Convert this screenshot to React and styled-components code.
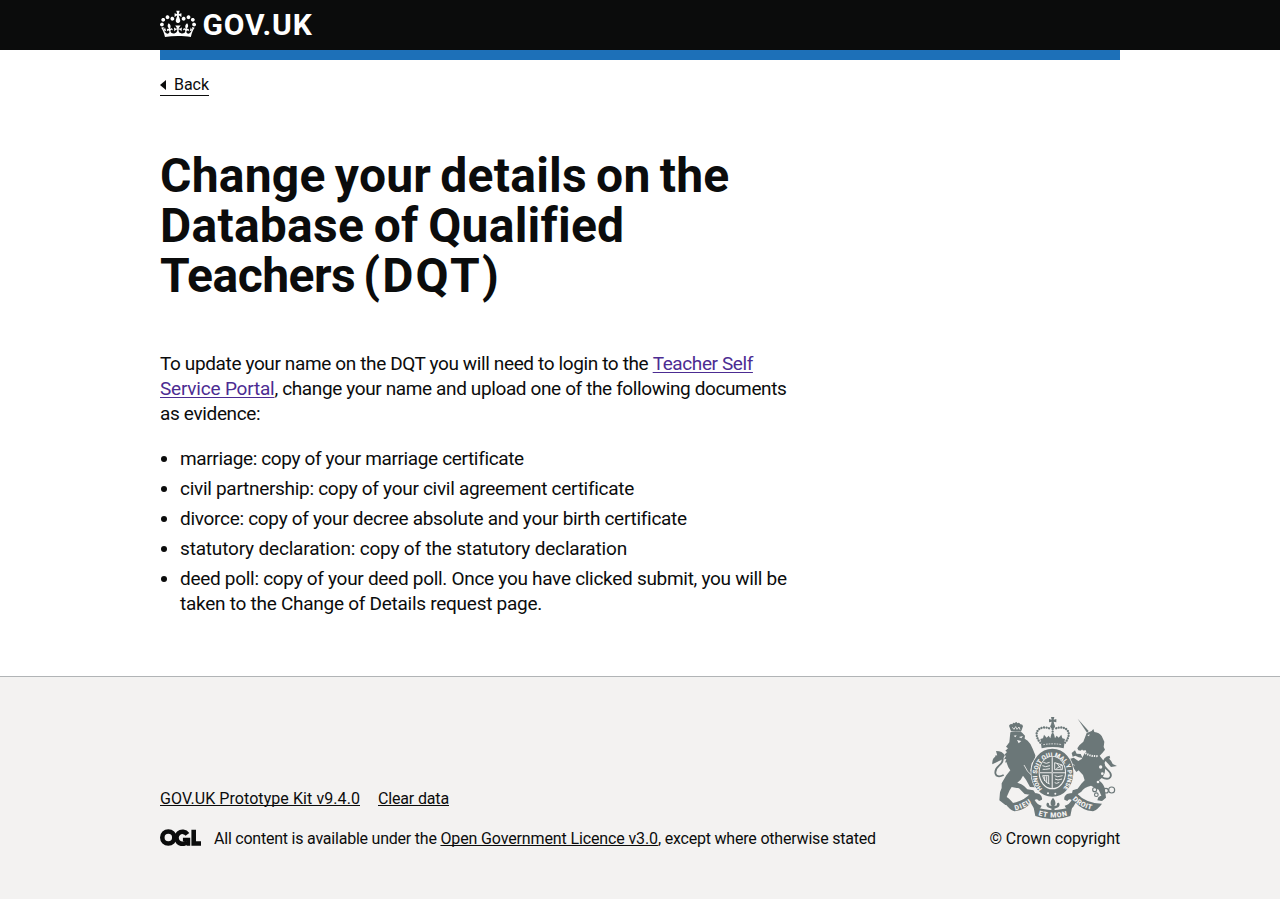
import React from "react";
import styled, { createGlobalStyle } from "styled-components";

const Global = createGlobalStyle`
  *, *::before, *::after { box-sizing: border-box; }
  body { margin: 0; background: #fff; color: #0b0c0c; font-family: Roboto, Arial, sans-serif; }
`;

const Page = styled.div`
  display: flex;
  flex-direction: column;
  min-height: 899px;
`;
const Container = styled.div`
  width: 960px;
  margin: 0 auto;
`;
const Header = styled.header`
  height: 50px;
  background: #0b0c0c;
  color: #fff;
`;
const Brand = styled.a`
  display: flex;
  height: 50px;
  padding-bottom: 3px;
  align-items: center;
  gap: 6.5px;
  color: #fff;
  text-decoration: none;
`;
const CrownIcon = styled.svg`
  width: 36px;
  height: 30px;
  padding: 1px 0;
  flex: none;
  fill: currentColor;
`;
const Wordmark = styled.span`
  font-size: 30px;
  line-height: 30px;
  font-weight: 700;
  letter-spacing: 0.9px;
  padding-top: 2px;
`;
const BlueBar = styled.div`
  height: 10px;
  background: #1d70b8;
`;
const BackLink = styled.a`
  display: flex;
  width: fit-content;
  align-items: center;
  gap: 8px;
  height: 21px;
  margin-top: 15px;
  border-bottom: 1px solid #0b0c0c;
  font-size: 16px;
  line-height: 20px;
  letter-spacing: -0.04px;
  color: #0b0c0c;
`;
const Arrow = styled.svg`
  width: 6px;
  height: 10px;
  fill: currentColor;
`;
const Main = styled.main`
  display: flex;
  flex-direction: column;
  width: 640px;
  padding: 55px 0 60px;
`;
const Line = styled.span`
  display: block;
  white-space: nowrap;
  letter-spacing: ${(p) => p.$track || 0}px;
  word-spacing: ${(p) => p.$gap || 0}px;
`;
const Run = styled.span`
  letter-spacing: ${(p) => p.$track || 0}px;
`;
const Title = styled.h1`
  margin: 0 0 50px;
  font-size: 48px;
  line-height: 50px;
  font-weight: 700;
`;
const Body = styled.p`
  margin: 0 0 20px;
  font-size: 19px;
  line-height: 25px;
`;
const TextLink = styled.a`
  color: ${(p) => (p.$visited ? "#4c2c92" : "#0b0c0c")};
  letter-spacing: ${(p) => p.$track || 0}px;
  text-decoration: underline;
  text-decoration-thickness: 1px;
  text-underline-offset: ${(p) => (p.$visited ? 2 : 1)}px;
  text-decoration-skip-ink: none;
`;
const List = styled.ul`
  display: flex;
  flex-direction: column;
  gap: 5px;
  margin: 0;
  padding: 0 0 0 20px;
  font-size: 19px;
  line-height: 25px;
`;
const Item = styled.li`
  list-style: disc;
`;
const Footer = styled.footer`
  flex: 1;
  padding-top: 40px;
  border-top: 1px solid #b1b4b6;
  background: #f3f2f1;
  font-size: 16px;
  line-height: 20px;
`;
const FooterRow = styled(Container)`
  display: flex;
  align-items: flex-end;
  justify-content: space-between;
`;
const Meta = styled.div`
  display: flex;
  flex-direction: column;
  gap: 20px;
`;
const MetaLinks = styled.div`
  display: flex;
  gap: 18px;
`;
const Licence = styled.div`
  display: flex;
  align-items: center;
  gap: 13px;
  white-space: nowrap;
`;
const OglLogo = styled.svg`
  width: 41px;
  height: 17px;
  margin-bottom: 3px;
  flex: none;
`;
const Copyright = styled.a`
  display: flex;
  flex-direction: column;
  align-items: flex-end;
  gap: 10px;
  color: #0b0c0c;
`;
const Arms = styled.svg`
  width: 130px;
  height: 102px;
  overflow: visible;
  fill: #6b7778;
`;

function Crown() {
  return (
    <CrownIcon viewBox="0 0 132 97" aria-hidden="true">
      <path
        fillRule="evenodd"
        d="M25 30.2c3.5 1.5 7.7-.2 9.1-3.7 1.5-3.6-.2-7.8-3.9-9.2-3.6-1.4-7.6.3-9.1 3.9-1.4 3.5.3 7.5 3.9 9zM9 39.5c3.6 1.5 7.8-.2 9.2-3.7 1.5-3.6-.2-7.8-3.9-9.1-3.6-1.5-7.6.2-9.1 3.8-1.4 3.5.3 7.5 3.8 9zM4.4 57.2c3.5 1.5 7.7-.2 9.1-3.8 1.5-3.6-.2-7.7-3.9-9.1-3.5-1.5-7.6.3-9.1 3.8-1.4 3.5.3 7.6 3.9 9.1zm38.3-21.4c3.5 1.5 7.7-.2 9.1-3.8 1.5-3.6-.2-7.7-3.9-9.1-3.6-1.5-7.6.3-9.1 3.8-1.3 3.6.4 7.7 3.9 9.1zm64.4-5.6c-3.6 1.5-7.8-.2-9.1-3.7-1.5-3.6.2-7.8 3.8-9.2 3.6-1.4 7.7.3 9.2 3.9 1.3 3.5-.4 7.5-3.9 9zm15.9 9.3c-3.6 1.5-7.7-.2-9.1-3.7-1.5-3.6.2-7.8 3.7-9.1 3.6-1.5 7.7.2 9.2 3.8 1.5 3.5-.3 7.5-3.8 9zm4.7 17.7c-3.6 1.5-7.8-.2-9.2-3.8-1.5-3.6.2-7.7 3.9-9.1 3.6-1.5 7.7.3 9.2 3.8 1.3 3.5-.4 7.6-3.9 9.1zM89.3 35.8c-3.6 1.5-7.8-.2-9.2-3.8-1.4-3.6.2-7.7 3.9-9.1 3.6-1.5 7.7.3 9.2 3.8 1.4 3.6-.3 7.7-3.9 9.1zM69.7 17.7l8.9 4.7V9.3l-8.9 2.8c-.2-.3-.5-.6-.9-.9L72.4 0H59.6l3.5 11.2c-.3.3-.6.5-.9.9l-8.8-2.8v13.1l8.8-4.7c.3.3.6.7.9.9l-5 15.4v.1c-.2.8-.4 1.6-.4 2.4 0 4.1 3.1 7.5 7 8.1h.2c.3 0 .7.1 1 .1.4 0 .7 0 1-.1h.2c4-.6 7.1-4.1 7.1-8.1 0-.8-.1-1.7-.4-2.4V34l-5.1-15.4c.4-.2.7-.6 1-.9zM66 92.8c16.9 0 32.8 1.1 47.1 3.2 4-16.9 8.9-26.7 14-33.5l-9.6-3.4c1 4.9 1.1 7.2 0 10.2-1.5-1.4-3-4.3-4.2-8.7L108.6 76c2.8-2 5-3.2 7.5-3.3-4.4 9.4-10 11.9-13.6 11.2-4.3-.8-6.3-4.6-5.6-7.9 1-4.7 5.7-5.9 8-.5 4.3-8.7-3-11.4-7.6-8.8 7.1-7.2 7.9-13.5 2.1-21.1-8 6.1-8.1 12.3-4.5 20.8-4.7-5.4-12.1-2.5-9.5 6.2 3.4-5.2 7.9-2 7.2 3.1-.6 4.3-6.4 7.8-13.5 7.2-10.3-.9-10.9-8-11.2-13.8 2.5-.5 7.1 1.8 11 7.3L80.2 60c-4.1 4.4-8 5.3-12.3 5.4 1.4-4.4 8-11.6 8-11.6H55.5s6.4 7.2 7.9 11.6c-4.2-.1-8-1-12.3-5.4l1.4 16.4c3.9-5.5 8.5-7.7 10.9-7.3-.3 5.8-.9 12.8-11.1 13.8-7.2.6-12.9-2.9-13.5-7.2-.7-5 3.8-8.3 7.1-3.1 2.7-8.7-4.6-11.6-9.4-6.2 3.7-8.5 3.6-14.7-4.6-20.8-5.8 7.6-5 13.9 2.2 21.1-4.7-2.6-11.9.1-7.7 8.8 2.3-5.5 7.1-4.2 8.1.5.7 3.3-1.3 7.1-5.7 7.9-3.5.7-9-1.8-13.5-11.2 2.5.1 4.7 1.3 7.5 3.3l-4.7-15.4c-1.2 4.4-2.7 7.2-4.3 8.7-1.1-3-.9-5.3 0-10.2l-9.5 3.4c5 6.9 9.9 16.7 14 33.5 14.8-2.1 30.8-3.2 47.7-3.2z"
      />
    </CrownIcon>
  );
}

/* Three interlocking strokes: ring, open ring with bar, and corner. */
function Ogl() {
  return (
    <OglLogo viewBox="0 0 483 196" fill="none" stroke="#0b0c0c" strokeWidth="54" aria-label="Open Government Licence">
      <circle cx="98" cy="98" r="71" />
      <path d="M323 61A71 71 0 1 0 321 146" />
      <path d="M270 122H335V196" strokeWidth="42" />
      <path d="M397 8V168H483" />
    </OglLogo>
  );
}

function CoatOfArms() {
  return (
    <Arms viewBox="30 36 390 306" aria-hidden="true">
      {/* central crown */}
      <path d="M213 36h10l-2 8 8-2v10l-8-2 2 9h-10l2-9-8 2V42l8 2z" />
      <circle cx="218" cy="64" r="7" />
      <g fill="none" stroke="#6b7778" strokeWidth="7" strokeLinecap="round" strokeDasharray="0.1 7.6">
        <path d="M181 113C156 84 176 58 211 71" />
        <path d="M255 113C280 84 260 58 225 71" />
        <path d="M218 72V92" />
      </g>
      <path d="M214 88h8l3 12 5-8 6 6 8-9 3 11 8 2-4 18q-33-7-66 0l-4-18 8-2 3-11 8 9 6-6 5 8z" />
      <path d="M183 117q35-8 70 0l-2 13q-33-8-66 0z" />
      <path d="M190 119q28-5 56 0" fill="none" stroke="#f3f2f1" strokeWidth="2.5" strokeDasharray="5 3" />

      {/* lion */}
      <path d="M93 79l-6-17q4-8 10-4 3-7 8-3 3-8 7 0 6-5 9 3 7-1 8 6l-6 16q-15-4-30-1z" />
      <path d="M97 67l5 6 5-8 4 8 6-7 3 8" fill="none" stroke="#f3f2f1" strokeWidth="2.5" />
      <path d="M91 82q16-6 34 0l10 10-1 9 9 6q11 10 15 24l8 20-1 12-10 12-4 22 10 14 5 16 2 20-18-1-12-22-9-12-7 12-10 9q14 4 20 10l10 10 18 3 6 9-12 5-20-3-17-17-22-4-6 10-9 20q6 3 14 12l7 8-5 5-20-1-18-14 2-24 5-13v-14l14-24 12-15-6-9-6-16-4 2 4-11-7 1 6-11-6-1 9-10-5-4 8-7-6-5 10-13z" />
      <path d="M71 210C42 224 40 197 57 182C73 168 74 150 46 154" fill="none" stroke="#6b7778" strokeWidth="5.5" />
      <path d="M37 178q-2-22 15-26l-4-14q20 0 26 13-2 12-17 17z" />
      <path d="M101 92l9-1-4 6zM117 96l12-3-5 7zM111 105l13 3-8 7z" fill="#f3f2f1" />
      <path d="M132 180q10 22 22 30" fill="none" stroke="#f3f2f1" strokeWidth="2.5" />

      {/* unicorn */}
      <path d="M293 41l33 37-5 5z" />
      <path d="M320 84l15-6 5-6 3 9q15 2 22 12l8 17-2 16 4 8-8 10-8 8 10 13q9 20 5 39l-6 13-11 9q18 15 18 30l3 22-12 10-14-2 3-9 9-5-8-18-23-12q-21 5-29 18l-14 9-14-4 2-9 15-5 11-15 10-10-5-16-19-20-7-11-11-2-7 8-6-11 10-12 12-4 14 10 10-6 8-16 6-7-2-3-14 1-8-1-3-6 6-9 12-11z" />
      <path d="M275 144l10-8 5 10 12 1 6 12-12-2-10-5-8 3zM268 177l19 5 10 13-8 6-9-13-16 2z" />
      <path d="M364 216C391 230 402 211 382 194C364 179 369 161 390 157" fill="none" stroke="#6b7778" strokeWidth="5.5" />
      <path d="M368 177q0-23 22-25l-4 8q9 8 12 17l13 6-18 3q-9-10-16-18z" />
      <path d="M304 136q22 20 52 17" fill="none" stroke="#f3f2f1" strokeWidth="6" strokeDasharray="4 3" />
      <path d="M322 91l7-3-2 6z" fill="#f3f2f1" />
      <g fill="none" stroke="#6b7778" strokeWidth="3.4">
        <circle cx="344" cy="254" r="6" />
        <circle cx="349" cy="269" r="5.5" />
        <circle cx="378" cy="257" r="7" />
        <circle cx="395" cy="255" r="9" />
        <circle cx="364" cy="280" r="5" />
      </g>
      <g fill="#f3f2f1">
        <circle cx="362" cy="186" r="5" />
        <circle cx="367" cy="206" r="4" />
        <circle cx="354" cy="231" r="4" />
      </g>

      {/* garter and shield */}
      <ellipse cx="217" cy="203" rx="65" ry="75" fill="#f3f2f1" />
      <ellipse cx="217" cy="203" rx="52" ry="61" fill="none" stroke="#6b7778" strokeWidth="22" />
      <path id="garter" d="M187 252A46 55 0 1 1 248 252" fill="none" />
      <text fontFamily="Roboto, sans-serif" fontWeight="900" fontSize="19" fill="#f3f2f1">
        <textPath href="#garter" textLength="246" lengthAdjust="spacingAndGlyphs">HONI SOIT QUI MAL Y PENSE</textPath>
      </text>
      <ellipse cx="217" cy="202" rx="38" ry="47" />
      <path d="M217 157v92M179 203h76" stroke="#f3f2f1" strokeWidth="4" />
      <path d="M217 157v92M179 203h76" stroke="#6b7778" strokeWidth="1" />
      <g fill="none" stroke="#f3f2f1" strokeWidth="2.8">
        <path d="M190 172l9 3 10-3M187 182l10 3 13-3M188 193h9l13-2" />
        <path d="M224 173v21h23v-14zM231 175l12 16M246 180l-17 11" />
        <path d="M188 212q5 20 21 25M188 212h18v25M194 214v14M200 214v20" />
        <path d="M224 212l9 3 15-3M225 222l9 3 12-3M224 233l6 2 8-3" />
      </g>
      <g fill="#f3f2f1">
        <circle cx="204" cy="265" r="3" />
        <circle cx="226" cy="266" r="3" />
      </g>

      {/* motto ribbon */}
      <path d="M76 296q48 0 76-31 14-3 26 2 10 7 8 17l-9 4q-5-8-13-3 8 15 21 17-6 14-18 11-9-7-15-20-16 22-49 26-15-6-27-23z" />
      <path d="M366 296q-48 0-76-31-14-3-29 2-10 7-8 17l9 4q5-8 13-3-8 15-21 17 6 14 18 11 9-7 15-20 19 22 52 26 15-6 27-23z" />
      <path d="M160 304q59 23 117 0l-6 29q-53 20-105 0z" />
      <path d="M219 278q13 15 4 25l8-2q-2-9 6-8 6 11-8 16l-6 2 2 6h-12l2-6-6-2q-14-5-8-16 8-1 6 8l8 2q-9-10 4-25z" />
      <path id="dieu" d="M106 316Q139 309 164 285" fill="none" />
      <path id="etmon" d="M175 331Q218 344 265 331" fill="none" />
      <path id="droit" d="M277 283Q302 309 340 315" fill="none" />
      <g fontFamily="Roboto, sans-serif" fontWeight="900" fontSize="21" fill="#f3f2f1">
        <text><textPath href="#dieu" textLength="54">DIEU</textPath></text>
        <text><textPath href="#etmon" textLength="88">ET MON</textPath></text>
        <text><textPath href="#droit" textLength="66">DROIT</textPath></text>
      </g>
    </Arms>
  );
}

export default function App() {
  return (
    <Page>
      <Global />
      <Header>
        <Container>
          <Brand>
            <Crown />
            <Wordmark>GOV.UK</Wordmark>
          </Brand>
        </Container>
      </Header>
      <Container>
        <BlueBar />
        <BackLink>
          <Arrow viewBox="0 0 6 10"><path d="M0 5L6 0V10Z" /></Arrow>
          Back
        </BackLink>
        <Main>
          <Title>
            <Line $track={0.24} $gap={-3}>Change your details on the</Line>
            <Line $track={0.25} $gap={-2.5}>Database of Qualified</Line>
            <Line $track={-0.5} $gap={-3.5}>
              Teachers <Run $track={2.2}>(DQT)</Run>
            </Line>
          </Title>
          <Body>
            <Line>
              <Run $track={-0.374}>To update your name on the DQT you will need to login to the </Run>
              <TextLink $visited $track={-0.4}>Teacher Self</TextLink>
            </Line>
            <Line>
              <TextLink $visited $track={-0.2}>Service Portal</TextLink>
              <Run $track={-0.377}>, change your name and upload one of the following documents</Run>
            </Line>
            <Line $track={-0.35}>as evidence:</Line>
          </Body>
          <List>
            <Item><Line $track={-0.36}>marriage: copy of your marriage certificate</Line></Item>
            <Item><Line $track={-0.29}>civil partnership: copy of your civil agreement certificate</Line></Item>
            <Item><Line $track={-0.295}>divorce: copy of your decree absolute and your birth certificate</Line></Item>
            <Item><Line $track={-0.178}>statutory declaration: copy of the statutory declaration</Line></Item>
            <Item>
              <Line $track={-0.29}>deed poll: copy of your deed poll. Once you have clicked submit, you will be</Line>
              <Line $track={-0.264}>taken to the Change of Details request page.</Line>
            </Item>
          </List>
        </Main>
      </Container>
      <Footer>
        <FooterRow>
          <Meta>
            <MetaLinks>
              <TextLink $track={0.074}>GOV.UK Prototype Kit v9.4.0</TextLink>
              <TextLink $track={-0.155}>Clear data</TextLink>
            </MetaLinks>
            <Licence>
              <Ogl />
              <span>
                <Run $track={-0.222}>All content is available under the </Run>
                <TextLink $track={-0.129}>Open Government Licence v3.0</TextLink>
                <Run $track={-0.202}>, except where otherwise stated</Run>
              </span>
            </Licence>
          </Meta>
          <Copyright>
            <CoatOfArms />
            <Run $track={-0.12}>© Crown copyright</Run>
          </Copyright>
        </FooterRow>
      </Footer>
    </Page>
  );
}
